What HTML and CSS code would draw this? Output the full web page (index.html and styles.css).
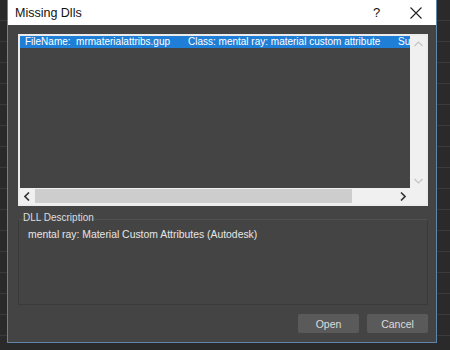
FILE: index.html
```html
<!DOCTYPE html>
<html lang="en">
<head>
    <meta charset="UTF-8">
    <title>Missing Dlls</title>
    <link rel="stylesheet" href="styles.css">
</head>
<body>
<div class="dialog">
    <div class="dialog-header">
        <span class="dialog-title">Missing Dlls</span>
        <span class="dialog-help">?</span>
        <span class="dialog-close">
            <svg width="12" height="12" viewBox="0 0 12 12"><path d="M0.5 0.5L11.5 11.5M11.5 0.5L0.5 11.5" stroke="#222" stroke-width="1.1" fill="none"/></svg>
        </span>
    </div>
    <div class="dialog-body">
        <div class="listbox">
            <div class="list-rows">
                <div class="list-row selected">
                    <span class="col-file">FileName:&nbsp; mrmaterialattribs.gup</span>
                    <span class="col-class">Class: mental ray: material custom attribute</span>
                    <span class="col-sup">Superclass</span>
                </div>
            </div>
            <div class="vscroll">
                <svg width="9" height="6" viewBox="0 0 9 6"><path d="M0.5 5L4.5 1L8.5 5" stroke="#c4c4c4" stroke-width="1.2" fill="none"/></svg>
                <svg width="9" height="6" viewBox="0 0 9 6"><path d="M0.5 1L4.5 5L8.5 1" stroke="#c4c4c4" stroke-width="1.2" fill="none"/></svg>
            </div>
            <div class="hscroll">
                <svg width="6" height="9" viewBox="0 0 6 9"><path d="M5 0.5L1 4.5L5 8.5" stroke="#333" stroke-width="1.6" fill="none"/></svg>
                <div class="hscroll-track"><div class="hscroll-thumb"></div></div>
                <svg width="6" height="9" viewBox="0 0 6 9"><path d="M1 0.5L5 4.5L1 8.5" stroke="#333" stroke-width="1.6" fill="none"/></svg>
            </div>
            <div class="corner"></div>
        </div>
        <div class="group">
            <div class="group-label">DLL Description</div>
            <div class="group-box">mental ray: Material Custom Attributes (Autodesk)</div>
        </div>
        <div class="dialog-footer">
            <button>Open</button>
            <button>Cancel</button>
        </div>
    </div>
</div>
</body>
</html>
```

FILE: styles.css
```css
* {
    margin: 0;
    padding: 0;
    box-sizing: border-box;
}

html, body {
    width: 450px;
    height: 350px;
    overflow: hidden;
}

body {
    background-color: #2a2a2a;
    background-image: repeating-linear-gradient(180deg, #2a2a2a 0, #2a2a2a 20px, #3a3a3a 20px, #3a3a3a 21px);
    font-family: "Liberation Sans", Arial, sans-serif;
    padding-left: 7px;
}

.dialog {
    width: 430px;
    height: 343px;
    border: 1px solid #5f86aa;
    border-top: 0;
    background: #444;
    display: flex;
    flex-direction: column;
}

.dialog-header {
    height: 25px;
    background: #fff;
    display: flex;
    align-items: center;
    padding-left: 7px;
    color: #111;
}

.dialog-title {
    flex: 1;
    font-size: 12.5px;
}

.dialog-help {
    font-size: 13px;
    width: 37px;
}

.dialog-close {
    width: 26px;
    display: flex;
    padding-top: 1px;
}

.dialog-body {
    flex: 1;
    padding: 9px 8px 0 10px;
    display: flex;
    flex-direction: column;
}

.listbox {
    height: 172px;
    border: 2px solid #ececec;
    display: grid;
    grid-template-columns: minmax(0, 1fr) 16px;
    grid-template-rows: 1fr 16px;
}

.list-rows {
    background: #444;
    overflow: hidden;
}

.list-row {
    height: 12px;
    display: grid;
    grid-template-columns: 168px 210px minmax(0, 1fr);
    overflow: hidden;
    white-space: nowrap;
    font-size: 10px;
    line-height: 12px;
    color: #fff;
}

.list-row.selected {
    background: #1f7fd6;
}

.list-row span {
    overflow: hidden;
}

.col-file {
    padding-left: 5px;
}

.vscroll {
    background: #f0f0f0;
    display: flex;
    flex-direction: column;
    justify-content: space-between;
    align-items: center;
    padding: 5px 0 4px;
}

.hscroll {
    background: #f0f0f0;
    display: flex;
    align-items: center;
    padding: 0 4px 0 4px;
    gap: 5px;
}

.hscroll-track {
    flex: 1;
    height: 14px;
}

.hscroll-thumb {
    width: 317px;
    height: 14px;
    background: #cdcdcd;
}

.corner {
    background: #f0f0f0;
}

.group {
    margin-top: 6px;
}

.group-label {
    position: relative;
    font-size: 10px;
    color: #ddd;
    padding-left: 5px;
    height: 12px;
    line-height: 12px;
    margin-bottom: -5px;
}

.group-box {
    height: 86px;
    border: 1px solid #3a3a3a;
    border-top-color: #505050;
    padding: 9px 9px;
    font-size: 10.4px;
    color: #e6e6e6;
}

.dialog-footer {
    display: flex;
    justify-content: flex-end;
    gap: 8px;
    margin-top: 9px;
}

.dialog-footer button {
    width: 61px;
    height: 19px;
    border: 0;
    border-radius: 2px;
    background: #5a5a5a;
    color: #ddd;
    font-family: "Liberation Sans", Arial, sans-serif;
    font-size: 10.5px;
    outline: none;
}
```
